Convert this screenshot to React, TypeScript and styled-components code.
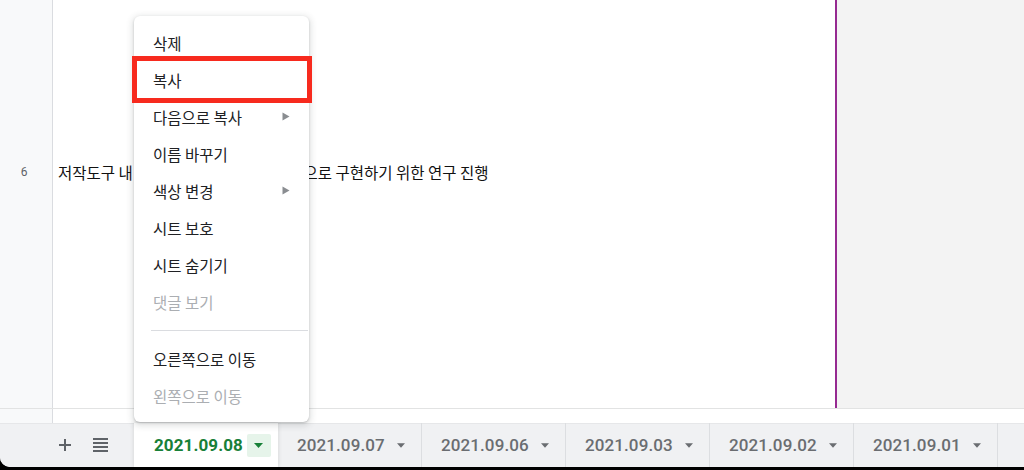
import React from "react";
import styled, { createGlobalStyle } from "styled-components";

const GlobalStyle = createGlobalStyle`
  *, *::before, *::after { box-sizing: border-box; }
  html, body { margin: 0; padding: 0; background: #000; }
  body { font-family: "Noto Sans CJK KR", "Noto Sans", sans-serif; }
`;

const Window = styled.div`
  position: relative;
  width: 1024px;
  height: 467px;
  display: flex;
  flex-direction: column;
  background: #fff;
  border-bottom-left-radius: 10px;
  overflow: hidden;
`;

const Grid = styled.div`
  display: flex;
  flex-direction: column;
  flex: 1;
`;

const Row = styled.div<{ $h: number; $line?: boolean }>`
  display: flex;
  flex-shrink: 0;
  height: ${(p) => p.$h}px;
  border-bottom: ${(p) => (p.$line ? "1px solid #e2e3e3" : "none")};
`;

const RowHeader = styled.div<{ $pad?: number }>`
  width: 53px;
  flex-shrink: 0;
  background: #f8f9fa;
  border-right: 1px solid #dadce0;
  display: flex;
  justify-content: center;
  padding-top: ${(p) => p.$pad ?? 0}px;
  padding-right: 4px;
  font-family: Roboto, "Liberation Sans", sans-serif;
  font-size: 12px;
  line-height: 18px;
  color: #5f6368;
`;

const Cell = styled.div<{ $pad?: number; $w?: number }>`
  width: ${(p) => (p.$w ? `${p.$w}px` : "auto")};
  flex: ${(p) => (p.$w ? "0 0 auto" : "1")};
  background: #fff;
  padding: ${(p) => p.$pad ?? 0}px 0 0 5px;
  font-size: 15.5px;
  line-height: 18px;
  color: #111;
  white-space: nowrap;
  overflow: hidden;
`;

const SelectionEdge = styled.div`
  width: 2px;
  flex-shrink: 0;
  background: #962a91;
`;

const OutsideArea = styled.div`
  flex: 1;
  background: #f3f3f3;
`;

const TabBar = styled.div`
  height: 44px;
  flex-shrink: 0;
  display: flex;
  background: #f0f1f3;
  box-shadow: inset 0 1px 0 #e6e7e9;
`;

const Controls = styled.div`
  width: 134px;
  flex-shrink: 0;
  display: flex;
  align-items: center;
  gap: 22px;
  padding-left: 59px;
  color: #5f6368;
`;

const Tab = styled.div<{ $active?: boolean }>`
  width: 144px;
  flex-shrink: 0;
  display: flex;
  align-items: center;
  padding-left: ${(p) => (p.$active ? 20 : 19)}px;
  gap: ${(p) => (p.$active ? 4 : 12)}px;
  background: ${(p) => (p.$active ? "#fff" : "transparent")};
  border-right: ${(p) => (p.$active ? "none" : "1px solid #dcdee1")};
  box-shadow: ${(p) => (p.$active ? "0 0 4px rgba(60,64,67,0.18)" : "none")};
  position: relative;
  font-family: Roboto, "Liberation Sans", sans-serif;
  font-size: 17px;
  font-weight: ${(p) => (p.$active ? 700 : 500)};
  color: ${(p) => (p.$active ? "#188038" : "#6a6d71")};
  letter-spacing: 0.1px;
`;

const ArrowBox = styled.span<{ $active?: boolean }>`
  display: flex;
  align-items: center;
  justify-content: center;
  width: ${(p) => (p.$active ? 24 : 8)}px;
  height: 23px;
  border-radius: 2px;
  background: ${(p) => (p.$active ? "#e6f4ea" : "transparent")};
`;

const Menu = styled.div`
  position: absolute;
  left: 134px;
  top: 16px;
  width: 175px;
  padding: 8px 0;
  background: #fff;
  border-radius: 6px;
  box-shadow: 0 2px 6px 2px rgba(60, 64, 67, 0.15),
    0 1px 2px rgba(60, 64, 67, 0.25);
  z-index: 5;
`;

const MenuItem = styled.div<{ $disabled?: boolean }>`
  height: 37px;
  display: flex;
  align-items: center;
  justify-content: space-between;
  padding: 0 19px 0 19px;
  font-size: 15.5px;
  line-height: 18px;
  color: ${(p) => (p.$disabled ? "#abaeb2" : "#202124")};
`;

const Divider = styled.div`
  height: 1px;
  margin: 10px 1px 9px 17px;
  background: #dadce0;
`;

const Highlight = styled.div`
  position: absolute;
  left: 132px;
  top: 56px;
  width: 180px;
  height: 47px;
  border: 5px solid #f72a1e;
  z-index: 6;
`;

const SubArrow = () => (
  <svg width="8" height="9" viewBox="0 0 8 9">
    <path d="M0.5 0.5 L7.5 4.5 L0.5 8.5 Z" fill="#8a8d91" />
  </svg>
);

const DownArrow = ({ color }: { color: string }) => (
  <svg width="9" height="5" viewBox="0 0 9 5">
    <path d="M0 0 L9 0 L4.5 5 Z" fill={color} />
  </svg>
);

const PlusIcon = () => (
  <svg width="12" height="12" viewBox="0 0 12 12">
    <path d="M6 0 V12 M0 6 H12" stroke="#5f6368" strokeWidth="2" />
  </svg>
);

const ListIcon = () => (
  <svg width="15" height="14" viewBox="0 0 15 14">
    <path
      d="M0 1 H15 M0 5 H15 M0 9 H15 M0 13 H15"
      stroke="#5f6368"
      strokeWidth="2"
    />
  </svg>
);

const menuItems: { label: string; sub?: boolean; disabled?: boolean }[] = [
  { label: "삭제" },
  { label: "복사" },
  { label: "다음으로 복사", sub: true },
  { label: "이름 바꾸기" },
  { label: "색상 변경", sub: true },
  { label: "시트 보호" },
  { label: "시트 숨기기" },
  { label: "댓글 보기", disabled: true },
];

const menuItems2: { label: string; disabled?: boolean }[] = [
  { label: "오른쪽으로 이동" },
  { label: "왼쪽으로 이동", disabled: true },
];

const tabs = ["2021.09.07", "2021.09.06", "2021.09.03", "2021.09.02", "2021.09.01"];

export default function App() {
  return (
    <>
      <GlobalStyle />
      <Window>
        <Grid>
          <Row $h={409} $line>
            <RowHeader $pad={163}>6</RowHeader>
            <Cell $w={782} $pad={163}>
              저작도구 내 콘텐츠 편집 기능을 웹기반으로 구현하기 위한 연구 진행
            </Cell>
            <SelectionEdge />
            <OutsideArea />
          </Row>
          <Row $h={14}>
            <RowHeader />
            <Cell />
          </Row>
        </Grid>
        <TabBar>
          <Controls>
            <PlusIcon />
            <ListIcon />
          </Controls>
          <Tab $active>
            2021.09.08
            <ArrowBox $active>
              <DownArrow color="#188038" />
            </ArrowBox>
          </Tab>
          {tabs.map((t) => (
            <Tab key={t}>
              {t}
              <ArrowBox>
                <DownArrow color="#6a6d71" />
              </ArrowBox>
            </Tab>
          ))}
        </TabBar>
        <Menu>
          {menuItems.map((m) => (
            <MenuItem key={m.label} $disabled={m.disabled}>
              <span>{m.label}</span>
              {m.sub && <SubArrow />}
            </MenuItem>
          ))}
          <Divider />
          {menuItems2.map((m) => (
            <MenuItem key={m.label} $disabled={m.disabled}>
              <span>{m.label}</span>
            </MenuItem>
          ))}
        </Menu>
        <Highlight />
      </Window>
    </>
  );
}
